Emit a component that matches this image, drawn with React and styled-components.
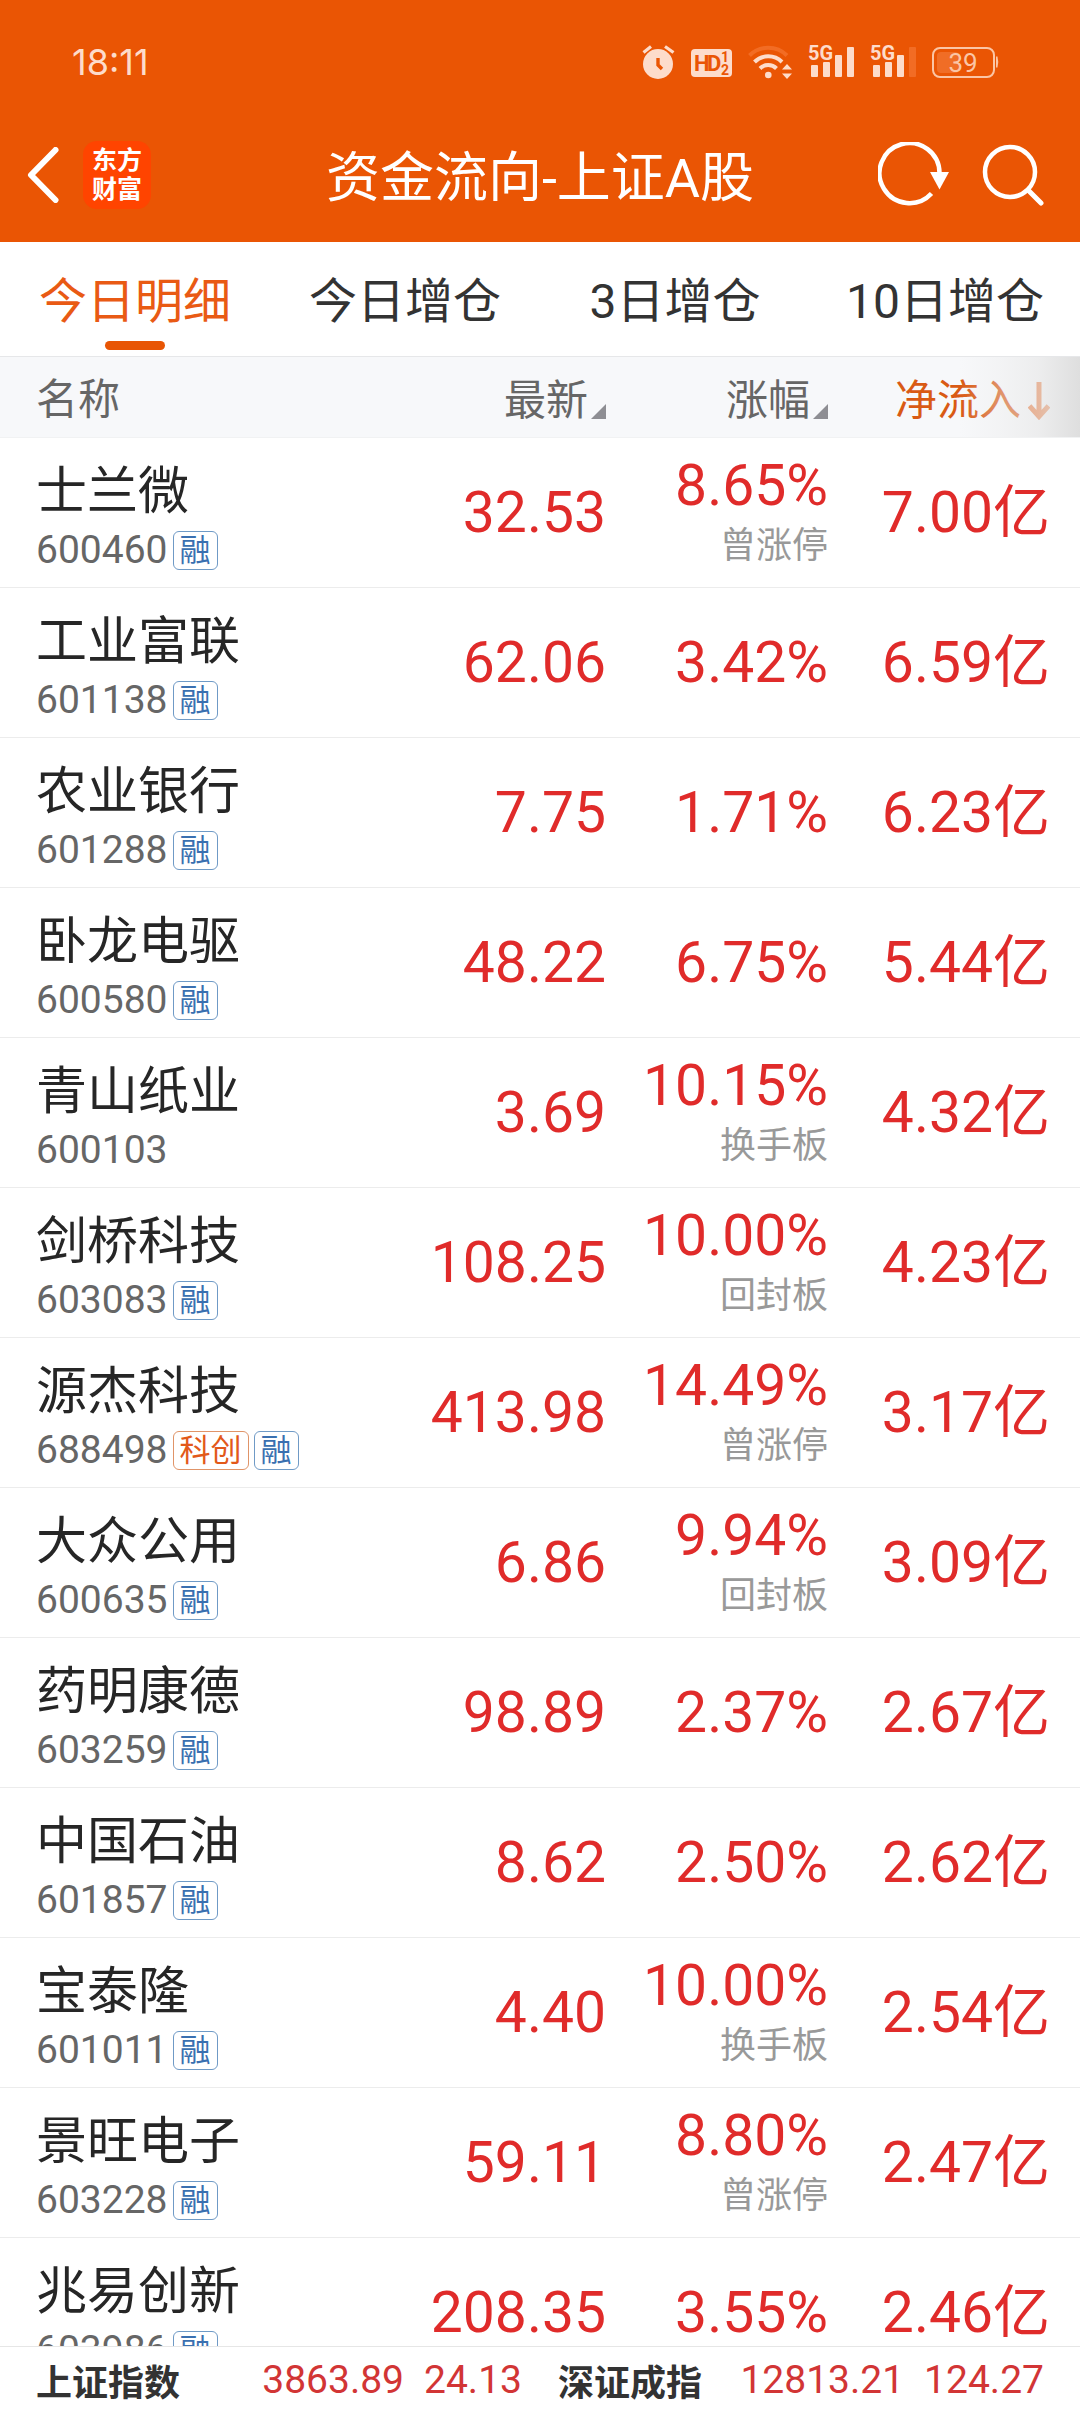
import React from "react"
import styled, { createGlobalStyle } from "styled-components"

const tabs = ["今日明细", "今日增仓", "3日增仓", "10日增仓"]

const stocks = [
  { name: "士兰微", code: "600460", tags: ["融"], price: "32.53", change: "8.65%", note: "曾涨停", flow: "7.00亿" },
  { name: "工业富联", code: "601138", tags: ["融"], price: "62.06", change: "3.42%", flow: "6.59亿" },
  { name: "农业银行", code: "601288", tags: ["融"], price: "7.75", change: "1.71%", flow: "6.23亿" },
  { name: "卧龙电驱", code: "600580", tags: ["融"], price: "48.22", change: "6.75%", flow: "5.44亿" },
  { name: "青山纸业", code: "600103", tags: [], price: "3.69", change: "10.15%", note: "换手板", flow: "4.32亿" },
  { name: "剑桥科技", code: "603083", tags: ["融"], price: "108.25", change: "10.00%", note: "回封板", flow: "4.23亿" },
  { name: "源杰科技", code: "688498", tags: ["科创", "融"], price: "413.98", change: "14.49%", note: "曾涨停", flow: "3.17亿" },
  { name: "大众公用", code: "600635", tags: ["融"], price: "6.86", change: "9.94%", note: "回封板", flow: "3.09亿" },
  { name: "药明康德", code: "603259", tags: ["融"], price: "98.89", change: "2.37%", flow: "2.67亿" },
  { name: "中国石油", code: "601857", tags: ["融"], price: "8.62", change: "2.50%", flow: "2.62亿" },
  { name: "宝泰隆", code: "601011", tags: ["融"], price: "4.40", change: "10.00%", note: "换手板", flow: "2.54亿" },
  { name: "景旺电子", code: "603228", tags: ["融"], price: "59.11", change: "8.80%", note: "曾涨停", flow: "2.47亿" },
  { name: "兆易创新", code: "603986", tags: ["融"], price: "208.35", change: "3.55%", flow: "2.46亿" }
]

const indexes = [
  { name: "上证指数", value: "3863.89", diff: "24.13" },
  { name: "深证成指", value: "12813.21", diff: "124.27" }
]

const AlarmIcon = () => (
  <svg width="33" height="36" viewBox="0 0 33 36" aria-hidden="true">
    <circle cx="16" cy="20" r="15" fill="#fddccb" />
    <path d="M1.500 8.500 9 2.500M23 2.500l8.500 6" stroke="#fddccb" strokeWidth="3.200" fill="none" />
    <path d="M16 14v7l4 4" stroke="#ea5504" strokeWidth="3.400" fill="none" />
  </svg>
)

const HdIcon = () => (
  <svg width="41" height="36" viewBox="0 0 41 36" aria-hidden="true">
    <rect y="5" width="41" height="28" rx="4" fill="#fddccb" />
    <g fill="#ea5504" fontFamily="Roboto, sans-serif" fontWeight="700">
      <text x="3" y="27" fontSize="22">H</text>
      <text x="16" y="27" fontSize="22">D</text>
      <text x="30" y="18" fontSize="14">1</text>
      <text x="30" y="31" fontSize="14">2</text>
    </g>
  </svg>
)

const WifiIcon = () => (
  <svg width="44" height="36" viewBox="0 0 44 36" aria-hidden="true">
    <g fill="none" stroke="#fddccb" strokeWidth="4">
      <path d="M1.500 11.500a26.500 26.500 0 0 1 37.500 0" stroke="#f26c24" />
      <path d="M6.500 18a19.500 19.500 0 0 1 27.500 0" />
      <path d="M12 24.500a11.500 11.500 0 0 1 16.500 0" />
    </g>
    <circle cx="20.300" cy="31" r="3.300" fill="#fddccb" />
    <path d="M34 25.500l5-5.500 5 5.500zM34 29.500l5 5.500 5-5.500z" fill="#fddccb" />
  </svg>
)

const SignalIcon = ({ level }) => (
  <svg width="46" height="36" viewBox="0 0 46 36" aria-hidden="true">
    <text x="0" y="16" fontSize="20" fontWeight="700" fontFamily="Roboto, sans-serif" fill="#fddccb">
      5G
    </text>
    {[21, 18, 11, 3].map((top, i) => (
      <rect
        key={top}
        x={3 + i * 12}
        y={top}
        width="7"
        height={33 - top}
        rx="1"
        fill={i < level ? "#fddccb" : "#f26c24"}
      />
    ))}
  </svg>
)

const BatteryIcon = () => (
  <svg width="67" height="36" viewBox="0 0 67 36" aria-hidden="true">
    <rect x="1" y="4" width="61" height="29" rx="7" fill="none" stroke="#fbc5a5" strokeWidth="2" />
    <rect x="5" y="8" width="22" height="21" rx="4" fill="#f06d26" />
    <path d="M64 12.500h1.500q1.500 5.500 0 11H64z" fill="#fbc5a5" />
    <text x="31" y="28" fontSize="26" textAnchor="middle" fontFamily="Roboto, sans-serif" fill="#fbc5a5">
      39
    </text>
  </svg>
)

const BackIcon = () => (
  <svg width="32" height="56" viewBox="0 0 32 56" aria-hidden="true">
    <path d="M28.500 3 4 28l24.500 25" fill="none" stroke="#fff" strokeWidth="6" strokeLinecap="round" strokeLinejoin="round" />
  </svg>
)

const RefreshIcon = () => (
  <svg width="72" height="66" viewBox="0 0 72 66" aria-hidden="true">
    <path d="M53.500 51.500A30 30 0 1 1 61.500 31" fill="none" stroke="#fff" strokeWidth="4.500" />
    <path d="M52 30h19l-9.500 17.500z" fill="#fff" />
  </svg>
)

const SearchIcon = () => (
  <svg width="62" height="66" viewBox="0 0 62 66" aria-hidden="true">
    <circle cx="28" cy="30" r="25" fill="none" stroke="#fff" strokeWidth="4.500" />
    <path d="M46.500 48.500 59 61" stroke="#fff" strokeWidth="5" strokeLinecap="round" />
  </svg>
)

const ArrowDown = () => (
  <svg width="22" height="38" viewBox="0 0 22 38" aria-hidden="true">
    <path d="M11 0v34M1.500 24 11 34.500 20.500 24" fill="none" stroke="#e8702f" strokeWidth="5" />
  </svg>
)

const App = () => (
  <Page>
    <GlobalStyle />
    <Header>
      <StatusBar>
        <Clock>18:11</Clock>
        <StatusIcons>
          <AlarmIcon />
          <HdIcon />
          <WifiIcon />
          <SignalIcon level={4} />
          <SignalIcon level={3} />
          <BatteryIcon />
        </StatusIcons>
      </StatusBar>
      <NavBar>
        <NavGroup>
          <IconButton aria-label="返回">
            <BackIcon />
          </IconButton>
          <Logo>
            <span>东方</span>
            <span>财富</span>
          </Logo>
        </NavGroup>
        <Title>资金流向-上证A股</Title>
        <NavGroup $end>
          <IconButton aria-label="刷新">
            <RefreshIcon />
          </IconButton>
          <IconButton aria-label="搜索">
            <SearchIcon />
          </IconButton>
        </NavGroup>
      </NavBar>
    </Header>

    <Tabs>
      {tabs.map((tab, i) => (
        <Tab key={tab} $active={i === 0}>
          {tab}
        </Tab>
      ))}
    </Tabs>

    <Scroller>
      <Table>
        <colgroup>
          <col />
          <Col />
          <Col />
          <Col $last />
        </colgroup>
        <thead>
          <tr>
            <HeadCell $left>名称</HeadCell>
            <HeadCell>
              <SortButton>
                最新
                <Corner />
              </SortButton>
            </HeadCell>
            <HeadCell>
              <SortButton>
                涨幅
                <Corner />
              </SortButton>
            </HeadCell>
            <HeadCell>
              <SortButton $active>
                净流入
                <ArrowDown />
              </SortButton>
              <Fade />
            </HeadCell>
          </tr>
        </thead>
        <tbody>
          {stocks.map(stock => (
            <tr key={stock.code}>
              <NameCell>
                <Name>{stock.name}</Name>
                <CodeLine>
                  <Code>{stock.code}</Code>
                  {stock.tags.map(tag => (
                    <Tag key={tag} $hot={tag === "科创"}>
                      {tag}
                    </Tag>
                  ))}
                </CodeLine>
              </NameCell>
              <Cell>{stock.price}</Cell>
              <Cell $noted={Boolean(stock.note)}>
                {stock.change}
                {stock.note && <Note>{stock.note}</Note>}
              </Cell>
              <Cell>{stock.flow}</Cell>
            </tr>
          ))}
        </tbody>
      </Table>
    </Scroller>

    <IndexBar>
      {indexes.map(item => (
        <IndexItem key={item.name}>
          <strong>{item.name}</strong>
          <span>{item.value}</span>
          <span>{item.diff}</span>
        </IndexItem>
      ))}
    </IndexBar>
  </Page>
)

const GlobalStyle = createGlobalStyle`
  * {
    box-sizing: border-box;
  }

  body {
    margin: 0;
    background: #fff;
    font-family: Roboto, "Noto Sans CJK SC", sans-serif;
  }

  svg {
    display: block;
  }
`

const Page = styled.div`
  display: flex;
  flex-direction: column;
  height: 100vh;
`

const Header = styled.header`
  background: #ea5504;
  color: #fff;
`

const StatusBar = styled.div`
  display: flex;
  align-items: center;
  justify-content: space-between;
  height: 112px;
  padding: 12px 81px 0 72px;
`

const Clock = styled.span`
  color: #fddccb;
  font-family: Inter, sans-serif;
  font-size: 36px;
`

const StatusIcons = styled.div`
  display: flex;
  gap: 16px;
`

const NavBar = styled.nav`
  display: grid;
  grid-template-columns: 1fr auto 1fr;
  align-items: center;
  height: 130px;
  padding: 0 27px 5px;
`

const NavGroup = styled.div`
  display: flex;
  align-items: center;
  justify-content: ${props => (props.$end ? "flex-end" : "flex-start")};
  gap: ${props => (props.$end ? "32px" : "24px")};
  padding-right: ${props => (props.$end ? "9px" : "0")};
`

const Button = styled.button`
  padding: 0;
  border: none;
  background: none;
  font: inherit;
  cursor: pointer;
`

const IconButton = styled(Button)`
  display: block;
`

const Logo = styled.div`
  display: flex;
  flex-direction: column;
  align-items: center;
  justify-content: center;
  width: 68px;
  height: 68px;
  border-radius: 14px;
  background: #ff4400;
  font-size: 25px;
  font-weight: 700;
  line-height: 29px;
`

const Title = styled.h1`
  margin: 0;
  padding-top: 9px;
  font-size: 54px;
  font-weight: 400;
  line-height: 60px;
`

const Tabs = styled.div`
  display: grid;
  grid-template-columns: repeat(4, 1fr);
  height: 114px;
`

const Tab = styled(Button)`
  position: relative;
  padding-bottom: 4px;
  color: ${props => (props.$active ? "#e95a14" : "#333")};
  font-size: 48px;

  &::after {
    content: "";
    display: ${props => (props.$active ? "block" : "none")};
    position: absolute;
    bottom: 6px;
    left: 50%;
    width: 60px;
    height: 9px;
    margin-left: -30px;
    border-radius: 5px;
    background: #e85504;
  }
`

const Scroller = styled.main`
  flex: 1;
  min-height: 0;
  overflow-y: auto;
  scrollbar-width: none;
`

const Table = styled.table`
  width: 100%;
  table-layout: fixed;
  border-collapse: separate;
  border-spacing: 0;
`

const Col = styled.col`
  width: ${props => (props.$last ? "252px" : "222px")};
`

const HeadCell = styled.th`
  position: sticky;
  top: 0;
  z-index: 1;
  height: 82px;
  padding: 5px 0 0 ${props => (props.$left ? "36px" : "0")};
  border-top: 1px solid #e6e7e9;
  border-bottom: 1px solid #f1f2f3;
  background: #f7f8fa;
  color: #666;
  font-size: 42px;
  font-weight: 400;
  line-height: 48px;
  text-align: ${props => (props.$left ? "left" : "right")};

  &:last-child {
    padding-right: 30px;
  }
`

const SortButton = styled(Button)`
  display: inline-flex;
  align-items: center;
  gap: ${props => (props.$active ? "7px" : "3px")};
  vertical-align: middle;
  color: ${props => (props.$active ? "#d95a14" : "#666")};
`

const Corner = styled.i`
  align-self: flex-end;
  margin-bottom: 6px;
  border-bottom: 15px solid #8e8e93;
  border-left: 15px solid transparent;
`

const Fade = styled.div`
  position: absolute;
  top: 0;
  right: 0;
  bottom: 0;
  width: 120px;
  background: linear-gradient(
    to right,
    rgba(240, 240, 240, 0),
    rgba(236, 236, 236, 0.4) 35%,
    rgba(230, 230, 230, 0.6) 65%,
    rgba(221, 221, 221, 0.95)
  );
  pointer-events: none;
`

const Cell = styled.td`
  height: 150px;
  padding: ${props => (props.$noted ? "7px" : "0")} 0 0;
  border-bottom: 1px solid #ececec;
  color: #e02b2a;
  font-size: 57px;
  line-height: 60px;
  text-align: right;
  vertical-align: middle;

  &:last-child {
    padding-right: 30px;
  }
`

const NameCell = styled(Cell)`
  padding: 24px 0 0 36px;
  text-align: left;
  vertical-align: top;
`

const Name = styled.div`
  color: #262626;
  font-size: 51px;
  line-height: 60px;
`

const CodeLine = styled.div`
  display: flex;
  align-items: center;
  gap: 5px;
  height: 39px;
  margin-top: 9px;
`

const Code = styled.span`
  color: #666;
  font-size: 39px;
  line-height: 39px;
`

const Tag = styled.span`
  height: 39px;
  padding: 0 6px;
  border: 1px solid ${props => (props.$hot ? "#e09468" : "#6f9ac6")};
  border-radius: 6px;
  color: ${props => (props.$hot ? "#e2591a" : "#3a70b0")};
  font-size: 31px;
  line-height: 38px;
`

const Note = styled.div`
  color: #999;
  font-size: 36px;
`

const IndexBar = styled.footer`
  display: grid;
  grid-template-columns: 1fr 1fr;
  gap: 36px;
  height: 66px;
  padding: 0 36px;
  border-top: 1px solid #e6e6e6;
  background: #fff;
`

const IndexItem = styled.div`
  display: flex;
  align-items: center;
  gap: 20px;
  color: #d23535;
  font-size: 39px;

  > strong {
    margin-right: auto;
    color: #333;
    font-size: 36px;
    font-weight: 700;
  }
`

export default App
